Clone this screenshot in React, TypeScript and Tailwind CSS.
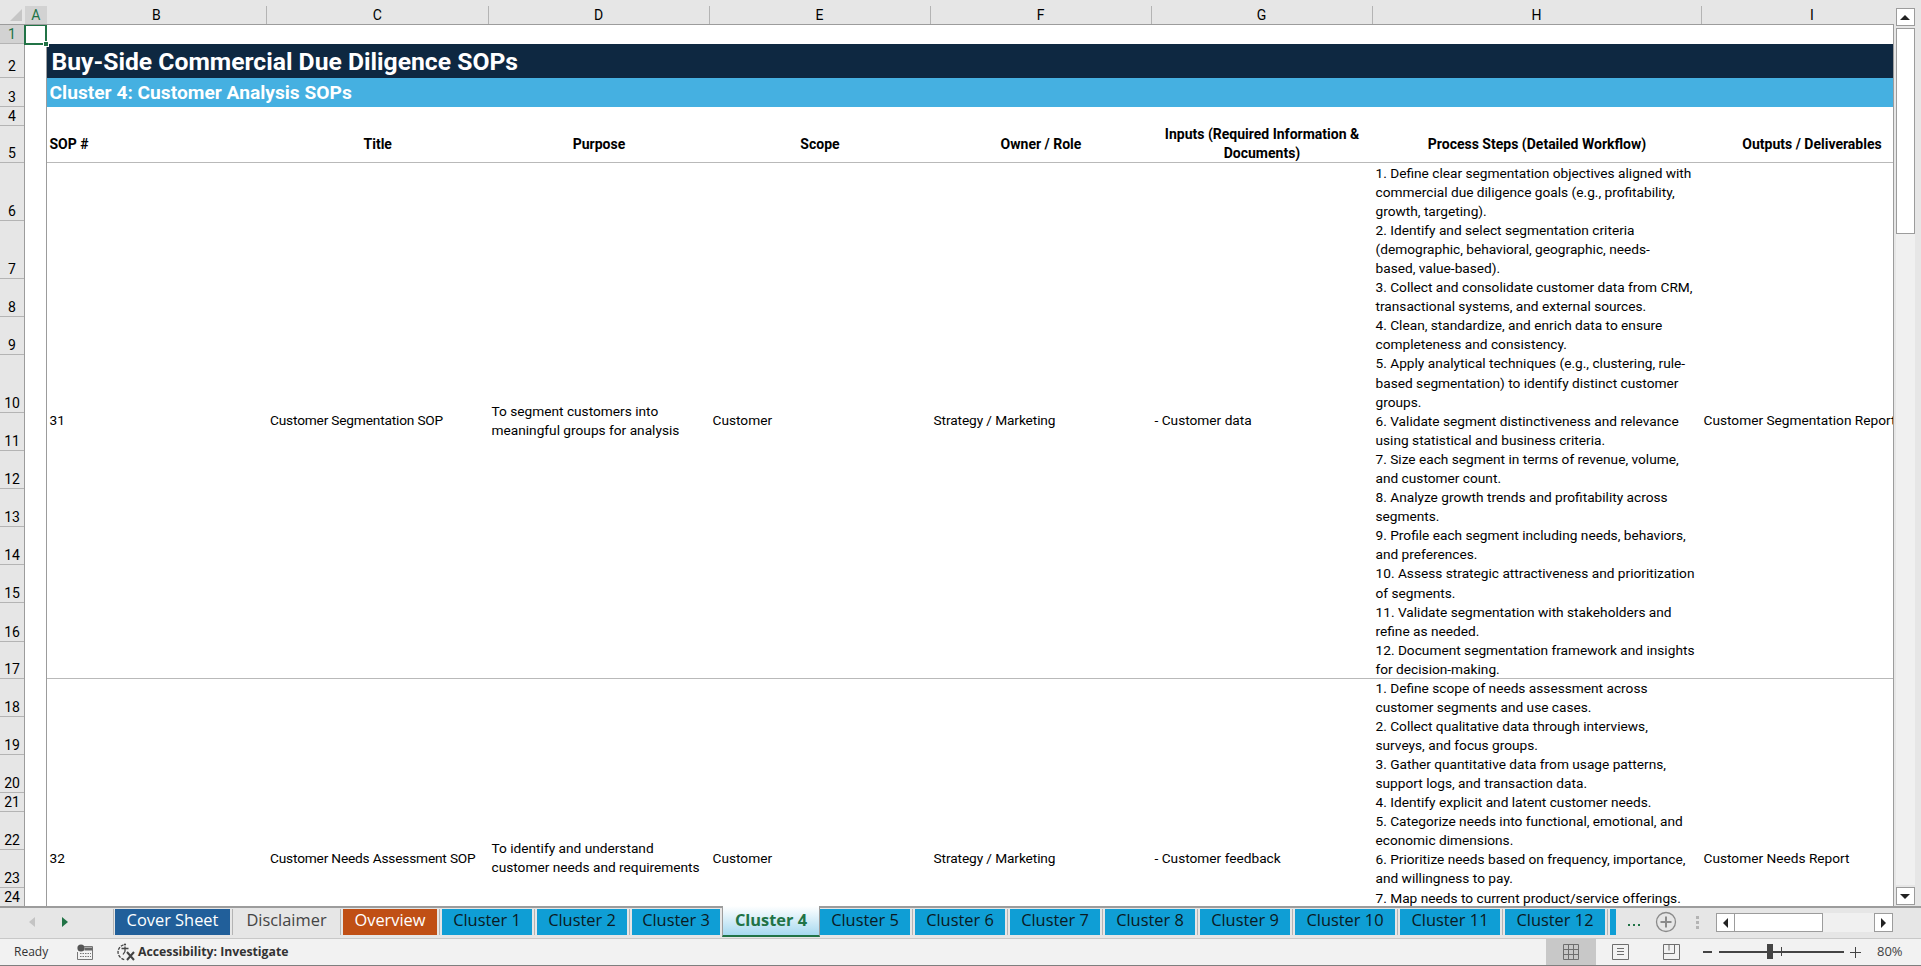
const COLUMNS = ['B', 'C', 'D', 'E', 'F', 'G', 'H', 'I'];
const COLUMN_WIDTHS = ['w-[220.5px]', 'w-[221.5px]', 'w-[221px]', 'w-[221px]', 'w-[221px]', 'w-[221px]', 'w-[329px]', 'w-[221px]'];

const ROWS = [
  { n: 1, h: 'h-[19px]' },
  { n: 2, h: 'h-[34px] pb-[2px]' },
  { n: 3, h: 'h-[29px]' },
  { n: 4, h: 'h-[19px]' },
  { n: 5, h: 'h-[37px]' },
  { n: 6, h: 'h-[58px]' },
  { n: 7, h: 'h-[58px]' },
  { n: 8, h: 'h-[38px]' },
  { n: 9, h: 'h-[38.3px]' },
  { n: 10, h: 'h-[57.8px]' },
  { n: 11, h: 'h-[38.2px]' },
  { n: 12, h: 'h-[37.9px]' },
  { n: 13, h: 'h-[38.3px]' },
  { n: 14, h: 'h-[37.9px]' },
  { n: 15, h: 'h-[37.9px]' },
  { n: 16, h: 'h-[38.3px]' },
  { n: 17, h: 'h-[37.8px]' },
  { n: 18, h: 'h-[37.9px]' },
  { n: 19, h: 'h-[37.9px]' },
  { n: 20, h: 'h-[37.9px]' },
  { n: 21, h: 'h-[19.2px]' },
  { n: 22, h: 'h-[38.2px]' },
  { n: 23, h: 'h-[37.9px]' },
  { n: 24, h: 'h-[19px]' },
];

const HEADERS = ['Title', 'Purpose', 'Scope', 'Owner / Role'];

const SEGMENTATION_STEPS = [
  '1. Define clear segmentation objectives aligned with',
  'commercial due diligence goals (e.g., profitability,',
  'growth, targeting).',
  '2. Identify and select segmentation criteria',
  '(demographic, behavioral, geographic, needs-',
  'based, value-based).',
  '3. Collect and consolidate customer data from CRM,',
  'transactional systems, and external sources.',
  '4. Clean, standardize, and enrich data to ensure',
  'completeness and consistency.',
  '5. Apply analytical techniques (e.g., clustering, rule-',
  'based segmentation) to identify distinct customer',
  'groups.',
  '6. Validate segment distinctiveness and relevance',
  'using statistical and business criteria.',
  '7. Size each segment in terms of revenue, volume,',
  'and customer count.',
  '8. Analyze growth trends and profitability across',
  'segments.',
  '9. Profile each segment including needs, behaviors,',
  'and preferences.',
  '10. Assess strategic attractiveness and prioritization',
  'of segments.',
  '11. Validate segmentation with stakeholders and',
  'refine as needed.',
  '12. Document segmentation framework and insights',
  'for decision-making.',
];

const NEEDS_STEPS = [
  '1. Define scope of needs assessment across',
  'customer segments and use cases.',
  '2. Collect qualitative data through interviews,',
  'surveys, and focus groups.',
  '3. Gather quantitative data from usage patterns,',
  'support logs, and transaction data.',
  '4. Identify explicit and latent customer needs.',
  '5. Categorize needs into functional, emotional, and',
  'economic dimensions.',
  '6. Prioritize needs based on frequency, importance,',
  'and willingness to pay.',
  '7. Map needs to current product/service offerings.',
];

const TABS = [
  { label: 'Cover Sheet', className: 'w-[115px] bg-[#215f9a] text-white' },
  { label: 'Disclaimer', className: 'w-[103px] text-[#444444]' },
  { label: 'Overview', className: 'w-[94px] bg-[#c04f15] text-white' },
  { label: 'Cluster 1', className: 'w-[90px] bg-[#0f9ed5] text-[#0b1a22]' },
  { label: 'Cluster 2', className: 'w-[90px] bg-[#0f9ed5] text-[#0b1a22]' },
];

const TABS_AFTER = [
  { label: 'Cluster 5', className: 'w-[90px]' },
  { label: 'Cluster 6', className: 'w-[90px]' },
  { label: 'Cluster 7', className: 'w-[90px]' },
  { label: 'Cluster 8', className: 'w-[90px]' },
  { label: 'Cluster 9', className: 'w-[90px]' },
  { label: 'Cluster 10', className: 'w-[100px]' },
  { label: 'Cluster 11', className: 'w-[100px]' },
  { label: 'Cluster 12', className: 'w-[100px]' },
];

function TabSeparator() {
  return (
    <div className="flex h-[26px] w-[5px] shrink-0 justify-center">
      <div className="h-full w-[1.5px] bg-[#b4b4b4]" />
    </div>
  );
}

function ColumnHeader() {
  return (
    <div className="flex h-[25px] shrink-0 overflow-hidden border-b border-[#9c9c9c] bg-[#e6e6e6] font-['Roboto',sans-serif] text-[14px] text-black">
      <div className="flex w-[25px] shrink-0 items-end justify-end pb-[3px] pr-[3px]">
        <div className="h-0 w-0 border-b-[12px] border-l-[12px] border-b-[#c6c6c6] border-l-transparent" />
      </div>
      <div className="mt-[6px] flex h-[18px] w-[21.5px] shrink-0 items-center justify-center bg-[#d2d2d2] text-[#217346]">
        A
      </div>
      {COLUMNS.map((col, i) => (
        <div
          key={col}
          className={`mt-[6px] flex h-[18px] shrink-0 items-center justify-center border-r border-[#b4b4b4] last:border-r-0 ${COLUMN_WIDTHS[i]}`}
        >
          {col}
        </div>
      ))}
    </div>
  );
}

function RowHeader() {
  return (
    <div className="w-[25px] shrink-0 border-r border-[#9c9c9c] bg-[#e6e6e6] font-['Roboto',sans-serif] text-[14px] leading-[17px] text-black">
      {ROWS.map((row) => (
        <div
          key={row.n}
          className={`flex items-end justify-center border-b border-[#b4b4b4] ${row.h} ${
            row.n === 1 ? 'bg-[#d2d2d2] text-[#217346]' : ''
          }`}
        >
          {row.n}
        </div>
      ))}
    </div>
  );
}

type SopRowProps = {
  num: number;
  title: string;
  purpose: string[];
  scope: string;
  owner: string;
  inputs: string;
  steps: string[];
  stepsClassName: string;
  output: string;
  height: string;
};

function SopRow({ num, title, purpose, scope, owner, inputs, steps, stepsClassName, output, height }: SopRowProps) {
  return (
    <div className={`flex shrink-0 items-center border-b border-[#b9b9b9] ${height}`}>
      <div className={`shrink-0 pl-[3px] ${COLUMN_WIDTHS[0]}`}>{num}</div>
      <div className={`shrink-0 pl-[3px] tracking-[-0.18px] ${COLUMN_WIDTHS[1]}`}>{title}</div>
      <div className={`shrink-0 pl-[3px] ${COLUMN_WIDTHS[2]}`}>
        {purpose.map((line) => (
          <div key={line}>{line}</div>
        ))}
      </div>
      <div className={`shrink-0 pl-[3px] ${COLUMN_WIDTHS[3]}`}>{scope}</div>
      <div className={`shrink-0 pl-[3px] tracking-[-0.1px] ${COLUMN_WIDTHS[4]}`}>{owner}</div>
      <div className={`shrink-0 pl-[3px] ${COLUMN_WIDTHS[5]}`}>{inputs}</div>
      <div className={`shrink-0 self-start whitespace-nowrap pl-[3px] leading-[19.1px] ${stepsClassName} ${COLUMN_WIDTHS[6]}`}>
        {steps.map((line) => (
          <div key={line}>{line}</div>
        ))}
      </div>
      <div className={`shrink-0 whitespace-nowrap pl-[2px] ${COLUMN_WIDTHS[7]}`}>{output}</div>
    </div>
  );
}

function Sheet() {
  return (
    <div className="relative flex min-h-0 flex-1 overflow-hidden">
      <RowHeader />
      <div className="w-[21.5px] shrink-0 border-r border-[#9c9c9c] bg-white" />
      <div className="flex min-w-0 flex-1 flex-col overflow-hidden border-r border-[#9c9c9c] bg-white font-['Roboto',sans-serif] text-[13.7px] leading-[19px] text-black">
        <div className="h-[19px] shrink-0" />
        <div className="flex h-[34px] shrink-0 items-center bg-[#0e2841] pl-[5px] pt-[1px] text-[24.7px] font-bold text-white">
          Buy-Side Commercial Due Diligence SOPs
        </div>
        <div className="flex h-[29px] shrink-0 items-center bg-[#45b0e1] pl-[3px] text-[19.2px] font-bold text-white">
          Cluster 4: Customer Analysis SOPs
        </div>
        <div className="h-[19px] shrink-0" />
        <div className="flex h-[37px] shrink-0 items-center border-b border-[#b9b9b9] text-[14px] font-bold">
          <div className={`shrink-0 pl-[3px] ${COLUMN_WIDTHS[0]}`}>SOP #</div>
          {HEADERS.map((label, i) => (
            <div key={label} className={`shrink-0 text-center ${COLUMN_WIDTHS[i + 1]}`}>
              {label}
            </div>
          ))}
          <div className={`shrink-0 text-center ${COLUMN_WIDTHS[5]}`}>
            <div>Inputs (Required Information &amp;</div>
            <div>Documents)</div>
          </div>
          <div className={`shrink-0 text-center ${COLUMN_WIDTHS[6]}`}>Process Steps (Detailed Workflow)</div>
          <div className={`shrink-0 whitespace-nowrap text-center ${COLUMN_WIDTHS[7]}`}>Outputs / Deliverables</div>
        </div>
        <SopRow
          num={31}
          title="Customer Segmentation SOP"
          purpose={['To segment customers into', 'meaningful groups for analysis']}
          scope="Customer"
          owner="Strategy / Marketing"
          inputs="- Customer data"
          steps={SEGMENTATION_STEPS}
          stepsClassName="pt-[0.5px]"
          output="Customer Segmentation Report"
          height="h-[516px]"
        />
        <SopRow
          num={32}
          title="Customer Needs Assessment SOP"
          purpose={['To identify and understand', 'customer needs and requirements']}
          scope="Customer"
          owner="Strategy / Marketing"
          inputs="- Customer feedback"
          steps={NEEDS_STEPS}
          stepsClassName="-mt-[0.5px]"
          output="Customer Needs Report"
          height="h-[359px]"
        />
      </div>
      {/* selected cell A1 */}
      <div className="absolute left-[24px] top-[-1px] h-[21px] w-[23px] border-2 border-[#217346]">
        <div className="absolute bottom-[-4px] right-[-4px] h-[6px] w-[6px] border border-white bg-[#217346]" />
      </div>
    </div>
  );
}

function VerticalScrollbar() {
  return (
    <div className="flex w-[27px] shrink-0 flex-col items-center bg-[#e6e6e6] pb-[1px] pl-[1px] pr-[6px] pt-[8px]">
      <button type="button" className="flex h-[18px] w-[19px] shrink-0 items-center justify-center border border-[#9c9c9c] bg-white">
        <span className="h-0 w-0 border-x-[5px] border-b-[5px] border-x-transparent border-b-[#222222]" />
      </button>
      <div className="mt-[2px] min-h-0 w-[19px] flex-1 bg-[#f0f0f0]">
        <div className="h-[206px] border border-[#9c9c9c] bg-white" />
      </div>
      <button type="button" className="mt-[2px] flex h-[18px] w-[19px] shrink-0 items-center justify-center border border-[#9c9c9c] bg-white">
        <span className="h-0 w-0 border-x-[5px] border-t-[5px] border-x-transparent border-t-[#222222]" />
      </button>
    </div>
  );
}

function SheetTab({ label, className }: { label: string; className: string }) {
  return (
    <div className={`flex h-[26px] shrink-0 items-center justify-center pb-[5px] ${className}`}>{label}</div>
  );
}

function TabBar() {
  return (
    <div className="relative z-10 flex h-[32px] shrink-0 items-start border-t-2 border-[#9c9c9c] bg-[#e6e6e6] pt-[1px] font-['Open_Sans',sans-serif] text-[16.4px] leading-[22px]">
      <div className="flex h-[26px] w-[112.5px] shrink-0 items-center pl-[29px]">
        <span className="h-0 w-0 border-y-[5px] border-r-[6px] border-y-transparent border-r-[#c4c4c4]" />
        <span className="ml-[27px] h-0 w-0 border-y-[5px] border-l-[6px] border-y-transparent border-l-[#217346]" />
      </div>
      <div className="h-[26px] w-[1.5px] shrink-0 bg-[#b4b4b4]" />
      <div className="w-[1px] shrink-0" />
      {TABS.map((tab) => (
        <div key={tab.label} className="flex">
          <SheetTab label={tab.label} className={tab.className} />
          <TabSeparator />
        </div>
      ))}
      <SheetTab label="Cluster 3" className="w-[88px] bg-[#0f9ed5] text-[#0b1a22]" />
      <div className="-mt-[3px] ml-[2px] flex h-[31px] w-[98px] shrink-0 items-center justify-center border-x border-b-2 border-x-[#9c9c9c] border-b-[#217346] bg-gradient-to-b from-white to-[#a6d9f0] pb-[2px] font-bold text-[#217346]">
        Cluster 4
      </div>
      {TABS_AFTER.map((tab, i) => (
        <div key={tab.label} className="flex">
          {i > 0 && <TabSeparator />}
          <SheetTab label={tab.label} className={`bg-[#0f9ed5] text-[#0b1a22] ${tab.className}`} />
        </div>
      ))}
      <TabSeparator />
      <div className="h-[26px] w-[6px] shrink-0 bg-[#0f9ed5]" />
      <div className="flex h-[26px] w-[22px] shrink-0 items-center pl-[12px]">
        <div className="mt-[5px] flex gap-[3px]">
          <span className="h-[2px] w-[2px] bg-[#217346]" />
          <span className="h-[2px] w-[2px] bg-[#217346]" />
          <span className="h-[2px] w-[2px] bg-[#217346]" />
        </div>
      </div>
      <svg width="22" height="22" viewBox="0 0 22 22" className="ml-[17px] mt-[2px] shrink-0" fill="none" stroke="#8a8a8a">
        <circle cx="11" cy="11" r="9.5" strokeWidth="1.3" />
        <path d="M11 5.5v11M5.5 11h11" strokeWidth="2" />
      </svg>
      <div className="ml-[19px] mt-[7px] flex shrink-0 flex-col gap-[2px]">
        <span className="h-[3px] w-[3px] bg-[#b4b4b4]" />
        <span className="h-[3px] w-[3px] bg-[#b4b4b4]" />
        <span className="h-[3px] w-[3px] bg-[#b4b4b4]" />
      </div>
      <div className="ml-[17px] mt-[4px] flex h-[19px] w-[177px] shrink-0 bg-[#f0f0f0]">
        <div className="flex h-full w-[19px] shrink-0 items-center justify-center border border-[#9c9c9c] bg-white">
          <span className="h-0 w-0 border-y-[5px] border-r-[5px] border-y-transparent border-r-[#222222]" />
        </div>
        <div className="h-full w-[88px] shrink-0 border-y border-r border-[#9c9c9c] bg-white" />
        <div className="flex-1" />
        <div className="flex h-full w-[19px] shrink-0 items-center justify-center border border-[#9c9c9c] bg-white">
          <span className="h-0 w-0 border-y-[5px] border-l-[5px] border-y-transparent border-l-[#222222]" />
        </div>
      </div>
    </div>
  );
}

function MacroIcon() {
  return (
    <svg width="16" height="16" viewBox="0 0 16 16" className="shrink-0" fill="none">
      <circle cx="4" cy="4" r="3.6" fill="#555555" />
      <path d="M7 2.5h8.5v13H.5V8" stroke="#777777" />
      <path d="M7.5 3.5h8v3h-8z" fill="#666666" />
      <path d="M3 9.5h11M3 12.5h11" stroke="#777777" strokeDasharray="1.5 1" />
    </svg>
  );
}

function AccessibilityIcon() {
  return (
    <svg width="20" height="20" viewBox="0 0 20 20" className="shrink-0" fill="none" stroke="#444444" strokeWidth="1.3">
      <path d="M7.5 2.8A8 8 0 0 0 2 10a8 8 0 0 0 6.5 7.6" strokeDasharray="3 1.2" />
      <circle cx="9" cy="2.5" r="1.1" fill="#444444" stroke="none" />
      <path d="M9 4.5v5M5.5 6.5h7M9 9.5l-2 3" />
      <path d="M11 10l7 8M18 10l-7 8" strokeWidth="2" />
    </svg>
  );
}

function StatusBar() {
  return (
    <div className="flex h-[28px] shrink-0 items-center border-y border-b-[#7f7f7f] border-t-[#c8c8c8] bg-[#f2f2f2] font-['Open_Sans',sans-serif] text-[12px] text-[#333333]">
      <span className="ml-[14px] w-[63px] shrink-0">Ready</span>
      <MacroIcon />
      <div className="ml-[23px]">
        <AccessibilityIcon />
      </div>
      <span className="ml-[2px] text-[12.25px] font-bold">Accessibility: Investigate</span>
      <div className="flex-1" />
      <div className="flex h-full w-[50px] shrink-0 items-center justify-center bg-[#c8c8c8]">
        <svg width="16" height="16" viewBox="0 0 16 16" fill="none" stroke="#6e6e6e">
          <path d="M.5.5h15v15H.5zM.5 5.5h15M.5 10.5h15M5.5.5v15M10.5.5v15" />
        </svg>
      </div>
      <svg width="17" height="16" viewBox="0 0 17 16" className="ml-[16px] shrink-0" fill="none" stroke="#6e6e6e">
        <path d="M.5.5h16v15H.5zM5 4.5h7M5 7.5h7M5 10.5h7" />
      </svg>
      <svg width="17" height="16" viewBox="0 0 17 16" className="ml-[34px] shrink-0" fill="none" stroke="#6e6e6e">
        <path d="M.5.5h16v15H.5zM.5 9.5h11V.5M6 .5v6" />
      </svg>
      <div className="ml-[23px] h-[1.5px] w-[9px] shrink-0 bg-[#444444]" />
      <div className="relative ml-[7px] h-[1.5px] w-[125px] shrink-0 bg-[#444444]">
        <div className="absolute left-[48px] top-[-7px] h-[15px] w-[6px] bg-[#444444]" />
        <div className="absolute left-[62px] top-[-4px] h-[9px] w-[1px] bg-[#444444]" />
      </div>
      <svg width="11" height="11" viewBox="0 0 11 11" className="ml-[6px] shrink-0" stroke="#444444">
        <path d="M0 5.5h11M5.5 0v11" />
      </svg>
      <span className="ml-[16px] mr-[20px] w-[24px] shrink-0 whitespace-nowrap text-[13px] text-[#444444]">80%</span>
    </div>
  );
}

export default function App() {
  return (
    <div className="flex h-screen w-full flex-col overflow-hidden bg-white">
      <div className="flex min-h-0 flex-1">
        <div className="flex min-w-0 flex-1 flex-col">
          <ColumnHeader />
          <Sheet />
        </div>
        <VerticalScrollbar />
      </div>
      <TabBar />
      <StatusBar />
    </div>
  );
}
